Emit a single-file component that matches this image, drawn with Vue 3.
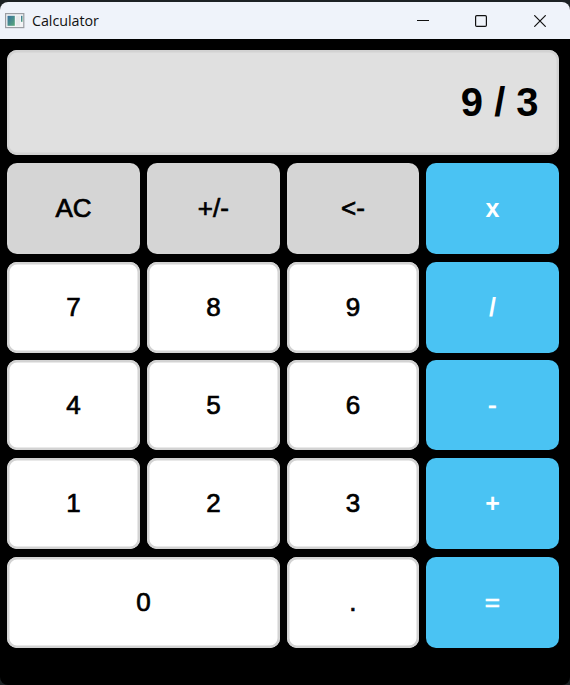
<script setup>
const keys = [
  { label: 'AC', kind: 'util' },
  { label: '+/-', kind: 'util' },
  { label: '<-', kind: 'util' },
  { label: 'x', kind: 'op strong' },
  { label: '7', kind: 'num' },
  { label: '8', kind: 'num' },
  { label: '9', kind: 'num' },
  { label: '/', kind: 'op strong' },
  { label: '4', kind: 'num' },
  { label: '5', kind: 'num' },
  { label: '6', kind: 'num' },
  { label: '-', kind: 'op' },
  { label: '1', kind: 'num' },
  { label: '2', kind: 'num' },
  { label: '3', kind: 'num' },
  { label: '+', kind: 'op strong' },
  { label: '0', kind: 'num wide' },
  { label: '.', kind: 'num' },
  { label: '=', kind: 'op' },
]
</script>

<template>
  <div class="desktop">
    <div class="window">
      <header class="titlebar">
        <svg class="app-icon" width="20" height="16" viewBox="0 0 20 16">
          <defs>
            <linearGradient id="pane" x1="0" y1="0" x2="1" y2="1">
              <stop offset="0" stop-color="#356fa0" />
              <stop offset="1" stop-color="#58a878" />
            </linearGradient>
          </defs>
          <rect x="0.6" y="0.6" width="18.2" height="14" fill="#f2f4f6" stroke="#9a9da3" stroke-width="1.2" />
          <rect x="2.5" y="2.8" width="7.3" height="10" fill="url(#pane)" />
          <rect x="11" y="2.8" width="4" height="10" fill="#e6e9eb" />
          <rect x="16" y="2.8" width="1.5" height="6" fill="url(#pane)" />
        </svg>
        <span class="title">Calculator</span>
        <svg class="control" width="12" height="12" viewBox="0 0 12 12">
          <path d="M0 5.5H12" />
        </svg>
        <svg class="control" width="12" height="12" viewBox="0 0 12 12">
          <rect x="0.6" y="0.6" width="10.8" height="10.8" rx="1.2" />
        </svg>
        <svg class="control" width="12" height="12" viewBox="0 0 12 12">
          <path d="M0.3 0.3L11.7 11.7M11.7 0.3L0.3 11.7" />
        </svg>
      </header>
      <main class="calculator">
        <div class="display">9 / 3</div>
        <div class="keypad">
          <button v-for="key in keys" :key="key.label" class="key" :class="key.kind">{{ key.label }}</button>
        </div>
      </main>
    </div>
  </div>
</template>

<style>
body {
  margin: 0;
  background: #1c2224;
}
</style>

<style scoped>
.desktop {
  box-sizing: border-box;
  width: 570px;
  height: 685px;
  padding-top: 2px;
  background: #1c2224;
  overflow: hidden;
}
.window {
  display: flex;
  flex-direction: column;
  height: 683px;
  background: #000;
  border-radius: 8px;
  overflow: hidden;
}
.titlebar {
  box-sizing: border-box;
  display: flex;
  align-items: center;
  height: 37px;
  padding: 0 24px 0 5px;
  background: #eff3fa;
}
.app-icon {
  flex: none;
}
.title {
  flex: 1;
  margin-left: 7px;
  font: 14.3px/20px "Open Sans", "Noto Sans", sans-serif;
  letter-spacing: -0.05px;
  color: #111;
}
.control {
  flex: none;
  margin-left: 46px;
  fill: none;
  stroke: #111;
  stroke-width: 1.2;
}
.control:last-child {
  margin-left: 47px;
}
.calculator {
  padding: 11.2px 11.4px 0 7.2px;
  font-family: "Liberation Sans", Arial, sans-serif;
}
.display {
  box-sizing: border-box;
  display: flex;
  align-items: center;
  justify-content: flex-end;
  height: 104.8px;
  padding: 0 20px 0 0;
  border-radius: 10px;
  background: #e0e0e0;
  box-shadow: inset 0 0 0 2.4px #d2d2d2;
  font-size: 40px;
  font-weight: bold;
  color: #000;
}
.keypad {
  display: grid;
  grid-template-columns: 132.6px 132.6px 132px 1fr;
  grid-template-rows: 91px 91px 90px 91px 91px;
  gap: 7.7px 7.3px;
  margin-top: 8px;
}
.key {
  box-sizing: border-box;
  min-width: 0;
  margin: 0;
  padding: 0;
  border: 0;
  border-radius: 10px;
  font-family: inherit;
  font-size: 26px;
  color: #000;
  -webkit-text-stroke: 0.7px currentColor;
}
.util {
  background: #d5d5d5;
}
.num {
  background: #fff;
  box-shadow: inset 0 0 0 2.5px #d3d3d3;
}
.op {
  background: #4ac3f3;
  color: #fff;
}
.strong {
  font-size: 25px;
  font-weight: bold;
  -webkit-text-stroke: 0;
}
.wide {
  grid-column: span 2;
}
</style>
